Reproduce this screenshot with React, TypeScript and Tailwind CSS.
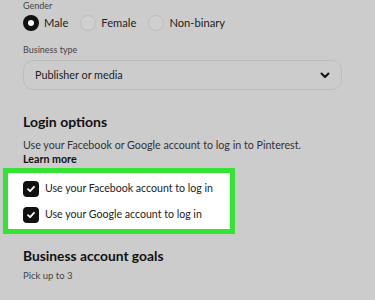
import React from "react";

function Radio({ checked, label }: { checked?: boolean; label: string }) {
  return (
    <div className="flex items-center gap-[5px]">
      {checked ? (
        <span className="w-[16px] h-[16px] rounded-full bg-[#111] flex items-center justify-center">
          <span className="w-[6px] h-[6px] rounded-full bg-white" />
        </span>
      ) : (
        <span className="w-[16px] h-[16px] rounded-full border border-[#bdbdbd] bg-[#cfcfcf]" />
      )}
      <span className="text-[11.2px] text-[#222] whitespace-nowrap">{label}</span>
    </div>
  );
}

function Check({ label }: { label: string }) {
  return (
    <div className="flex items-center gap-[6px] h-[16px]">
      <span className="w-[16px] h-[16px] rounded-[4px] bg-[#111] flex items-center justify-center shrink-0">
        <svg width="10" height="10" viewBox="0 0 10 10" fill="none">
          <path d="M2 5.2 L4.1 7.2 L8 2.8" stroke="white" strokeWidth="1.8" strokeLinecap="round" strokeLinejoin="round" />
        </svg>
      </span>
      <span className="text-[10.6px] text-[#222] whitespace-nowrap">{label}</span>
    </div>
  );
}

export default function App() {
  return (
    <div
      className="w-[375px] h-[300px] bg-[#cdcccd] overflow-hidden flex flex-col"
      style={{ fontFamily: 'Lato, "Liberation Sans", sans-serif' }}
    >
      <div className="pl-[23px] pr-[33px] flex flex-col">
        <div className="text-[9px] text-[#444] leading-[11px]">Gender</div>
        <div className="flex items-center gap-[12px] mt-[3px] h-[18px]">
          <Radio checked label="Male" />
          <Radio label="Female" />
          <Radio label="Non-binary" />
        </div>
        <div className="text-[9px] text-[#444] mt-[12px] leading-[12px]">Business type</div>
        <div className="mt-[4px] h-[30px] rounded-[10px] border border-[#bdbcbd] flex items-center justify-between pl-[11px] pr-[10px]">
          <span className="text-[10.8px] text-[#222]">Publisher or media</span>
          <svg width="12" height="12" viewBox="0 0 12 12" fill="none">
            <path d="M2.5 4.5 L6 8 L9.5 4.5" stroke="#111" strokeWidth="2" strokeLinecap="round" strokeLinejoin="round" />
          </svg>
        </div>
        <div className="text-[14px] font-bold text-[#111] mt-[22px] leading-[20px] whitespace-nowrap">Login options</div>
        <div className="text-[10.7px] text-[#333] mt-[6px] leading-[14px] whitespace-nowrap">
          Use your Facebook or Google account to log in to Pinterest.
        </div>
        <div className="text-[10.7px] font-bold text-[#111] leading-[14px]">Learn more</div>
      </div>
      <div className="ml-[3px] mt-[2px] w-[232px] h-[66px] border-[5px] border-[#33e433] bg-white flex flex-col pt-[8px] gap-[10px] pl-[15px]">
        <Check label="Use your Facebook account to log in" />
        <Check label="Use your Google account to log in" />
      </div>
      <div className="pl-[23px] flex flex-col">
        <div className="text-[13.8px] font-bold text-[#111] mt-[12px] leading-[20px] whitespace-nowrap">Business account goals</div>
        <div className="text-[9.5px] text-[#444] mt-[3px] leading-[14px]">Pick up to 3</div>
      </div>
    </div>
  );
}
